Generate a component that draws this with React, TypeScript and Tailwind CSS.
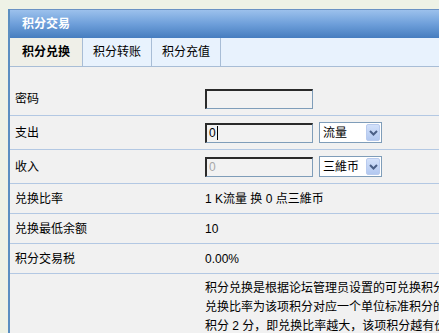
import React from "react";

const font = { fontFamily: '"Liberation Sans", "Noto Sans CJK SC", sans-serif' };

function Chevron() {
  return (
    <svg width="9" height="6" viewBox="0 0 9 6">
      <path d="M1 1 L4.5 4.5 L8 1" fill="none" stroke="#4a5f86" strokeWidth="2" />
    </svg>
  );
}

function Select({ label }: { label: string }) {
  return (
    <div className="ml-[6px] flex h-[21px] w-[63px] items-center justify-between border border-[#7f9db9] bg-white pl-[3px] pr-[1px]">
      <span className="text-[12px] leading-none text-black">{label}</span>
      <div className="flex h-[17px] w-[14px] items-center justify-center rounded-[2px] border border-[#b9cbee] bg-gradient-to-b from-[#d3e1fa] to-[#b2c8f0]">
        <Chevron />
      </div>
    </div>
  );
}

function Input({ value, disabled, caret }: { value?: string; disabled?: boolean; caret?: boolean }) {
  return (
    <div className="flex h-[20px] w-[108px] items-center border-t-2 border-l-2 border-b border-r border-t-[#2a2a2a] border-l-[#2a2a2a] border-b-[#7f9db9] border-r-[#7f9db9] bg-[#f2f2f2] pl-[2px]">
      {value !== undefined && (
        <span className={"text-[12px] leading-none " + (disabled ? "text-[#a8a8a8]" : "text-black")}>{value}</span>
      )}
      {caret && <span className="ml-[1px] h-[14px] w-[1px] bg-black" />}
    </div>
  );
}

function Row({ label, children, h }: { label: string; children?: React.ReactNode; h: string }) {
  return (
    <div className={"flex items-center border-b border-[#b3c8e3] " + h}>
      <div className="w-[195px] pl-[5px] text-[12px] text-black">{label}</div>
      <div className="flex items-center text-[12px] text-black">{children}</div>
    </div>
  );
}

export default function App() {
  return (
    <div className="h-[333px] w-[439px] overflow-hidden bg-[#eef2e6] pl-[8px] pt-[9px]" style={font}>
      <div className="w-[700px] border-l-2 border-[#5b8fc1]">
        <div className="flex h-[29px] items-center border-t border-[#6a92c4] bg-gradient-to-b from-[#9cc1ec] via-[#6e9fda] to-[#467dbf] pl-[12px] text-[12px] font-bold text-white">
          积分交易
        </div>
        <div className="flex h-[29px] border-b border-[#a8bdd6] bg-[#e8f2fd] text-[12px] text-black">
          <div className="flex w-[73px] items-center justify-center border-r border-[#a8bdd6] bg-[#efefe8] font-bold">积分兑换</div>
          <div className="flex w-[69px] items-center justify-center border-r border-[#a8bdd6]">积分转账</div>
          <div className="flex w-[69px] items-center justify-center border-r border-[#a8bdd6]">积分充值</div>
        </div>
        <div className="bg-[#f1f1f1] pt-[15px]">
          <Row label="密码" h="h-[34px]">
            <Input />
          </Row>
          <Row label="支出" h="h-[34px]">
            <Input value="0" caret />
            <Select label="流量" />
          </Row>
          <Row label="收入" h="h-[34px]">
            <Input value="0" disabled />
            <Select label="三維币" />
          </Row>
          <Row label="兑换比率" h="h-[30px]">
            1 K流量 换 0 点三維币
          </Row>
          <Row label="兑换最低余额" h="h-[30px]">
            10
          </Row>
          <Row label="积分交易税" h="h-[30px]">
            0.00%
          </Row>
          <div className="flex pt-[5px]">
            <div className="w-[195px]" />
            <div className="whitespace-nowrap text-[12px] leading-[19px] text-black">
              <div>积分兑换是根据论坛管理员设置的可兑换积分项目，将您的某种积分兑换成另一种积分。</div>
              <div>兑换比率为该项积分对应一个单位标准积分的值。例如该项积分兑换比率为 2，</div>
              <div>积分 2 分，即兑换比率越大，该项积分越有价值。</div>
            </div>
          </div>
        </div>
      </div>
    </div>
  );
}
